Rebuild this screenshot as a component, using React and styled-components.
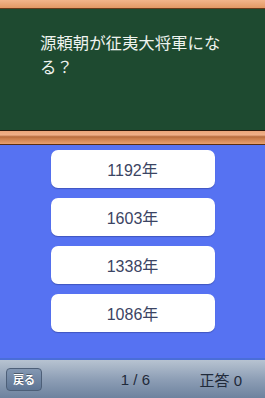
import React from 'react';
import styled, { createGlobalStyle } from 'styled-components';

const Global = createGlobalStyle`
  html, body { margin: 0; padding: 0; }
  body {
    width: 265px;
    height: 398px;
    overflow: hidden;
    font-family: "Noto Sans CJK JP", "Noto Sans", sans-serif;
  }
`

const Screen = styled.div`
  width: 265px;
  height: 398px;
  display: flex;
  flex-direction: column;
  background: #5672f2;
`
const Frame = styled.div`
  height: 8px;
  background: linear-gradient(#f3b48a, #e39864);
  border-bottom: 1px solid #6a3a1a;
`
const Board = styled.div`
  height: 121px;
  background: #1e4a30;
  padding: 21px 20px 0 40px;
  box-sizing: border-box;
  color: #eef3ee;
  font-size: 16.4px;
  line-height: 24px;
  white-space: nowrap;
`
const Ledge = styled.div`
  height: 13px;
  border-top: 1px solid #2a1a0c;
  border-bottom: 1px solid #5a2e12;
  background: linear-gradient(#e9a57a 0, #f0b088 30%, #b56a3c 45%, #c77a48 55%, #e8a070 100%);
`
const Answers = styled.div`
  flex: 1;
  display: flex;
  flex-direction: column;
  align-items: center;
  gap: 10px;
  padding-top: 5px;
`
const Answer = styled.button`
  width: 164px;
  height: 38px;
  border: none;
  border-radius: 7px;
  background: #fff;
  box-shadow: 0 1px 1px rgba(0,0,40,0.25);
  font-family: "Liberation Sans", "Noto Sans CJK JP", sans-serif;
  font-size: 16px;
  color: #3b4463;
  padding: 0;
`
const Toolbar = styled.div`
  height: 38px;
  border-top: 2px solid #4a6ed8;
  background: linear-gradient(#b7c3d1, #8e9fb6 50%, #6d829e);
  display: flex;
  align-items: center;
  padding: 0 6px;
  font-family: "Liberation Sans", "Noto Sans CJK JP", sans-serif;
  color: #1f2a3a;
`
const BackButton = styled.button`
  width: 36px;
  height: 23px;
  border: 1px solid #4d5f78;
  border-radius: 4px;
  background: linear-gradient(#8397b2, #5e7594);
  color: #fff;
  font-family: "Noto Sans CJK JP", sans-serif;
  font-size: 11px;
  font-weight: bold;
  padding: 0;
  text-shadow: 0 -1px 0 rgba(0,0,0,0.4);
`
const Label = styled.div`
  font-size: 15px;
  width: ${p => p.w}px;
  text-align: ${p => p.align || 'center'};
`

export default function App() {
  const options = ['1192年', '1603年', '1338年', '1086年'];
  return (
    <Screen>
      <Global />
      <Frame />
      <Board>源頼朝が征夷大将軍にな<br />る？</Board>
      <Ledge />
      <Answers>
        {options.map(o => <Answer key={o}>{o}</Answer>)}
      </Answers>
      <Toolbar>
        <BackButton>戻る</BackButton>
        <Label w={108} align="right">1 / 6</Label>
        <Label w={92} align="right">正答 0</Label>
      </Toolbar>
    </Screen>
  );
}
